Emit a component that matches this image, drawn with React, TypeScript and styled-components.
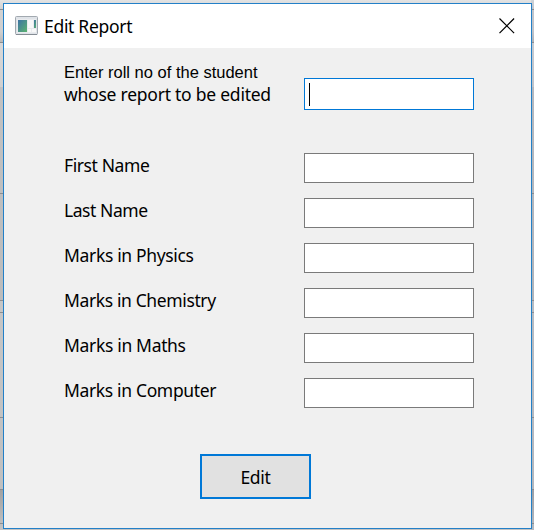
import React from "react";
import styled, { createGlobalStyle } from "styled-components";

const GlobalStyle = createGlobalStyle`
  * { box-sizing: border-box; }
  body { margin: 0; overflow: hidden; }
`;

const edgeLine = (y: number, color: string) =>
  `linear-gradient(${color}, ${color}) 0 ${y}px / 100% 1px no-repeat`;

const Desktop = styled.div`
  width: 534px;
  height: 530px;
  padding: 3px 2px 1px 3px;
  background:
    ${[9, 42, 193, 300, 312, 417, 489, 523].map((y) => edgeLine(y, "#8d8e90")).join(",")},
    linear-gradient(90deg, transparent 0 531px, rgba(130, 150, 180, 0.22) 531px),
    linear-gradient(#e3e3e3 0, #d2d2d2 9px, #cfcfcf 32px, #b9b9b9 42px, #d8d8d8 43px, #d0d0d0 87px, #c2c2c2 87px, #bcbcbc 300px, #c6c6c6 301px, #c0c0c0 489px, #a2a2a2 490px, #c4c4c4 530px);
`;

const Dialog = styled.main`
  width: 529px;
  height: 526px;
  display: flex;
  flex-direction: column;
  border: 1px solid #2380c8;
  background: #f0f0f0;
  color: #000;
  font: 17.5px/24px "Noto Sans", "Open Sans", sans-serif;
`;

const TitleBar = styled.header`
  height: 44px;
  flex: none;
  display: flex;
  align-items: center;
  padding: 0 16px 0 11px;
  background: #fff;
`;

const Title = styled.h1`
  flex: 1;
  margin: 0 0 0 6px;
  font-size: 17.5px;
  font-weight: 400;
  letter-spacing: -0.3px;
`;

const CloseButton = styled.button`
  display: flex;
  padding: 0;
  border: 0;
  background: none;
`;

const Form = styled.form`
  display: flex;
  flex-direction: column;
  padding: 0 57px 0 60px;
`;

const Row = styled.div<{ $lookup?: boolean }>`
  height: ${(p) => (p.$lookup ? 75 : 30)}px;
  margin: ${(p) => (p.$lookup ? "30px 0 0" : "0 0 15px")};
  display: flex;
  justify-content: space-between;
  align-items: flex-start;
`;

const Label = styled.label<{ $spacing?: number }>`
  white-space: nowrap;
  letter-spacing: ${(p) => p.$spacing ?? 0}px;
`;

const LookupLabel = styled(Label)`
  display: flex;
  flex-direction: column;
  margin-top: -16px;
`;

const PlainLine = styled.span`
  margin-bottom: -1px;
  font: 16.5px/21px "Liberation Sans", Arial, sans-serif;
  letter-spacing: 0;
`;

const Field = styled.div<{ $focused?: boolean }>`
  width: 170px;
  height: ${(p) => (p.$focused ? 32 : 30)}px;
  flex: none;
  padding: 4px 0 0 4px;
  border: 1px solid ${(p) => (p.$focused ? "#0078d7" : "#7a7a7a")};
  background: #fff;
`;

const Caret = styled.div`
  width: 1px;
  height: 23px;
  background: #000;
`;

const EditButton = styled.button`
  width: 111px;
  height: 45px;
  align-self: flex-start;
  margin: 31px 0 0 136px;
  padding: 1px 0 0;
  border: 2px solid #0078d7;
  background: #e1e1e1;
  color: #000;
  font: inherit;
  letter-spacing: -0.3px;
`;

const WindowIcon = () => (
  <svg width="23" height="20" viewBox="0 0 23 20" aria-hidden="true">
    <defs>
      <linearGradient id="pane" x1="0" y1="0" x2="1" y2="1">
        <stop offset="0" stopColor="#3e73a4" />
        <stop offset="1" stopColor="#5bb36f" />
      </linearGradient>
    </defs>
    <rect x="0.5" y="0.5" width="22" height="18" rx="1" fill="#dfe3e8" stroke="#a2a9b0" />
    <path d="M1 18.5h21" stroke="#858c94" />
    <rect x="2" y="3" width="19" height="14" fill="#e9ebee" />
    <rect x="3" y="4" width="9" height="12" fill="url(#pane)" />
    <rect x="13" y="4" width="5" height="8" fill="#f8f8f8" />
    <rect x="13" y="13" width="3" height="3" fill="#f8f8f8" />
    <rect x="17" y="13" width="4" height="3" fill="#f8f8f8" />
    <rect x="19" y="4" width="2" height="8" fill="url(#pane)" />
  </svg>
);

const fields = [
  { name: "First Name", spacing: -0.4 },
  { name: "Last Name", spacing: -0.44 },
  { name: "Marks in Physics", spacing: -0.34 },
  { name: "Marks in Chemistry", spacing: -0.38 },
  { name: "Marks in Maths", spacing: -0.33 },
  { name: "Marks in Computer", spacing: -0.35 },
];

export default function App() {
  return (
    <Desktop>
      <GlobalStyle />
      <Dialog>
        <TitleBar>
          <WindowIcon />
          <Title>Edit Report</Title>
          <CloseButton type="button" aria-label="Close">
            <svg width="16" height="16" viewBox="0 0 16 16">
              <path d="M0.5 0.5l14.6 14.6M15.1 0.5L0.5 15.1" stroke="#000" strokeWidth="1.2" />
            </svg>
          </CloseButton>
        </TitleBar>
        <Form>
          <Row $lookup>
            <LookupLabel $spacing={-0.24}>
              <PlainLine>Enter roll no of the student</PlainLine>
              <span>whose report to be edited</span>
            </LookupLabel>
            <Field $focused>
              <Caret />
            </Field>
          </Row>
          {fields.map((f) => (
            <Row key={f.name}>
              <Label $spacing={f.spacing}>{f.name}</Label>
              <Field />
            </Row>
          ))}
          <EditButton type="button">Edit</EditButton>
        </Form>
      </Dialog>
    </Desktop>
  );
}
